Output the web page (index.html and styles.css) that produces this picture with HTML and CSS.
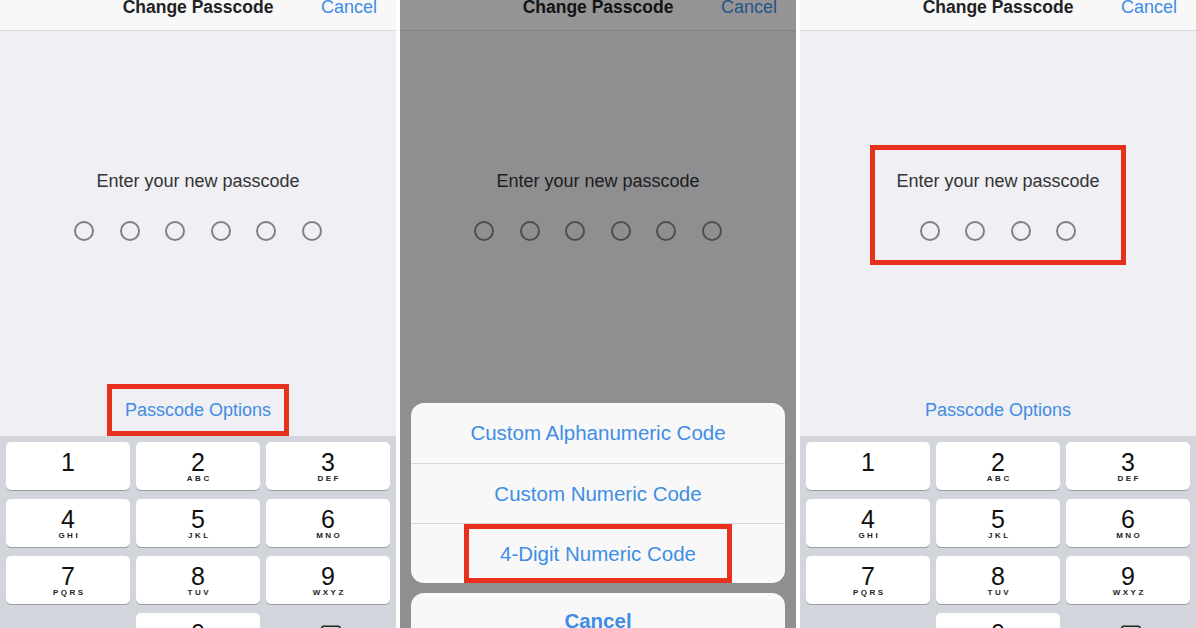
FILE: index.html
```html
<!DOCTYPE html>
<html lang="en">
<head>
  <meta charset="UTF-8">
  <title>Change Passcode</title>
  <link rel="stylesheet" href="styles.css">
</head>
<body>

<div class="screens">

  <!-- step 1: tap Passcode Options -->
  <div class="phone">
    <div class="navbar">
      <span></span>
      <span class="nav-title">Change Passcode</span>
      <span class="nav-cancel">Cancel</span>
    </div>
    <div class="main">
      <div class="prompt">
        <div class="prompt-text">Enter your new passcode</div>
        <div class="dots">
          <span class="dot"></span><span class="dot"></span><span class="dot"></span>
          <span class="dot"></span><span class="dot"></span><span class="dot"></span>
        </div>
      </div>
      <div class="options"><span class="options-link marked">Passcode Options</span></div>
    </div>
    <div class="keypad">
      <div class="key"><span class="num">1</span></div>
      <div class="key"><span class="num">2</span><span class="abc">ABC</span></div>
      <div class="key"><span class="num">3</span><span class="abc">DEF</span></div>
      <div class="key"><span class="num">4</span><span class="abc">GHI</span></div>
      <div class="key"><span class="num">5</span><span class="abc">JKL</span></div>
      <div class="key"><span class="num">6</span><span class="abc">MNO</span></div>
      <div class="key"><span class="num">7</span><span class="abc">PQRS</span></div>
      <div class="key"><span class="num">8</span><span class="abc">TUV</span></div>
      <div class="key"><span class="num">9</span><span class="abc">WXYZ</span></div>
      <div class="key blank"></div>
      <div class="key"><span class="num">0</span></div>
      <div class="key blank delete">
        <svg width="26" height="19" viewBox="0 0 26 19"><path d="M8 1.2h15a2 2 0 0 1 2 2v12.6a2 2 0 0 1-2 2H8L1.3 9.5z" fill="none" stroke="#222" stroke-width="1.6" stroke-linejoin="round"/><path d="M12.5 6l7 7M19.5 6l-7 7" stroke="#222" stroke-width="1.6" stroke-linecap="round"/></svg>
      </div>
    </div>
  </div>

  <!-- step 2: pick 4-Digit Numeric Code -->
  <div class="phone">
    <div class="navbar">
      <span></span>
      <span class="nav-title">Change Passcode</span>
      <span class="nav-cancel">Cancel</span>
    </div>
    <div class="main">
      <div class="prompt">
        <div class="prompt-text">Enter your new passcode</div>
        <div class="dots">
          <span class="dot"></span><span class="dot"></span><span class="dot"></span>
          <span class="dot"></span><span class="dot"></span><span class="dot"></span>
        </div>
      </div>
      <div class="options"><span class="options-link">Passcode Options</span></div>
    </div>
    <div class="dim"></div>
    <div class="sheet">
      <div class="sheet-group">
        <div class="sheet-row">Custom Alphanumeric Code</div>
        <div class="sheet-row">Custom Numeric Code</div>
        <div class="sheet-row"><span class="sheet-pick">4-Digit Numeric Code</span></div>
      </div>
      <div class="sheet-group sheet-cancel">Cancel</div>
    </div>
  </div>

  <!-- step 3: four digit passcode -->
  <div class="phone">
    <div class="navbar">
      <span></span>
      <span class="nav-title">Change Passcode</span>
      <span class="nav-cancel">Cancel</span>
    </div>
    <div class="main">
      <div class="prompt marked">
        <div class="prompt-text">Enter your new passcode</div>
        <div class="dots">
          <span class="dot"></span><span class="dot"></span><span class="dot"></span><span class="dot"></span>
        </div>
      </div>
      <div class="options"><span class="options-link">Passcode Options</span></div>
    </div>
    <div class="keypad">
      <div class="key"><span class="num">1</span></div>
      <div class="key"><span class="num">2</span><span class="abc">ABC</span></div>
      <div class="key"><span class="num">3</span><span class="abc">DEF</span></div>
      <div class="key"><span class="num">4</span><span class="abc">GHI</span></div>
      <div class="key"><span class="num">5</span><span class="abc">JKL</span></div>
      <div class="key"><span class="num">6</span><span class="abc">MNO</span></div>
      <div class="key"><span class="num">7</span><span class="abc">PQRS</span></div>
      <div class="key"><span class="num">8</span><span class="abc">TUV</span></div>
      <div class="key"><span class="num">9</span><span class="abc">WXYZ</span></div>
      <div class="key blank"></div>
      <div class="key"><span class="num">0</span></div>
      <div class="key blank delete">
        <svg width="26" height="19" viewBox="0 0 26 19"><path d="M8 1.2h15a2 2 0 0 1 2 2v12.6a2 2 0 0 1-2 2H8L1.3 9.5z" fill="none" stroke="#222" stroke-width="1.6" stroke-linejoin="round"/><path d="M12.5 6l7 7M19.5 6l-7 7" stroke="#222" stroke-width="1.6" stroke-linecap="round"/></svg>
      </div>
    </div>
  </div>

</div>

</body>
</html>
```

FILE: styles.css
```css
body {
  margin: 0;
  background: #fff;
  font-family: "Liberation Sans", Arial, sans-serif;
  overflow: hidden;
}

.screens {
  display: grid;
  grid-template-columns: repeat(3, 396px);
  gap: 4px;
  height: 628px;
}

.phone {
  position: relative;
  background: #efeff4;
  height: 628px;
  overflow: hidden;
  display: flex;
  flex-direction: column;
}

.navbar {
  flex: none;
  display: grid;
  grid-template-columns: 1fr auto 1fr;
  height: 30px;
  background: #f8f8f9;
  border-bottom: 1px solid #dcdce0;
  line-height: 15px;
}

.nav-title {
  font-size: 17.5px;
  font-weight: bold;
  color: #222;
}

.nav-cancel {
  justify-self: end;
  padding-right: 19px;
  font-size: 18px;
  color: #3f8de4;
}

.main {
  flex: none;
  height: 405px;
  display: flex;
  flex-direction: column;
  align-items: center;
  padding-top: 114px;
  box-sizing: border-box;
}

.prompt {
  border: 5px solid transparent;
  padding: 21px 21px 19px;
  text-align: center;
}

.prompt-text {
  font-size: 18px;
  line-height: 20px;
  color: #333;
}

.dots {
  display: flex;
  justify-content: center;
  gap: 25.5px;
  margin-top: 30px;
}

.dot {
  width: 20px;
  height: 20px;
  box-sizing: border-box;
  border: 2px solid #808084;
  border-radius: 50%;
}

.options {
  margin-top: auto;
}

.options-link {
  display: block;
  border: 5px solid transparent;
  padding: 11px 13px;
  font-size: 18px;
  line-height: 20px;
  color: #3f8de4;
}

.marked {
  border-color: #e8311d;
}

.keypad {
  flex: 1;
  background: #d2d5db;
  display: grid;
  grid-template-columns: repeat(3, 1fr);
  grid-auto-rows: 48px;
  gap: 9px 6px;
  padding: 6px 6px 0;
}

.key {
  background: #fff;
  border-radius: 5px;
  box-shadow: 0 1px 0 #9a9da3;
  display: flex;
  flex-direction: column;
  align-items: center;
  padding-top: 8px;
  box-sizing: border-box;
  color: #111;
}

.key.blank {
  background: none;
  box-shadow: none;
}

.key.delete {
  padding-top: 12px;
}

.num {
  font-size: 25px;
  line-height: 24px;
}

.abc {
  font-size: 8px;
  font-weight: bold;
  letter-spacing: 2.5px;
  line-height: 10px;
  margin-right: -2.5px;
  color: #222;
}

.dim {
  position: absolute;
  inset: 0;
  background: rgba(0, 0, 0, 0.4);
}

.sheet {
  position: absolute;
  left: 11px;
  right: 11px;
  top: 403px;
}

.sheet-group {
  background: #f8f8f9;
  border-radius: 13px;
  overflow: hidden;
  font-size: 20.5px;
  color: #3f8de4;
  text-align: center;
}

.sheet-row {
  height: 60px;
  display: flex;
  justify-content: center;
  align-items: center;
  border-top: 1px solid #d9d9dd;
  box-sizing: border-box;
}

.sheet-row:first-child {
  border-top: none;
}

.sheet-pick {
  align-self: stretch;
  display: flex;
  align-items: center;
  padding: 0 31px;
  border: 5px solid #e8311d;
}

.sheet-cancel {
  margin-top: 10px;
  height: 56px;
  line-height: 56px;
  font-weight: bold;
}
```
